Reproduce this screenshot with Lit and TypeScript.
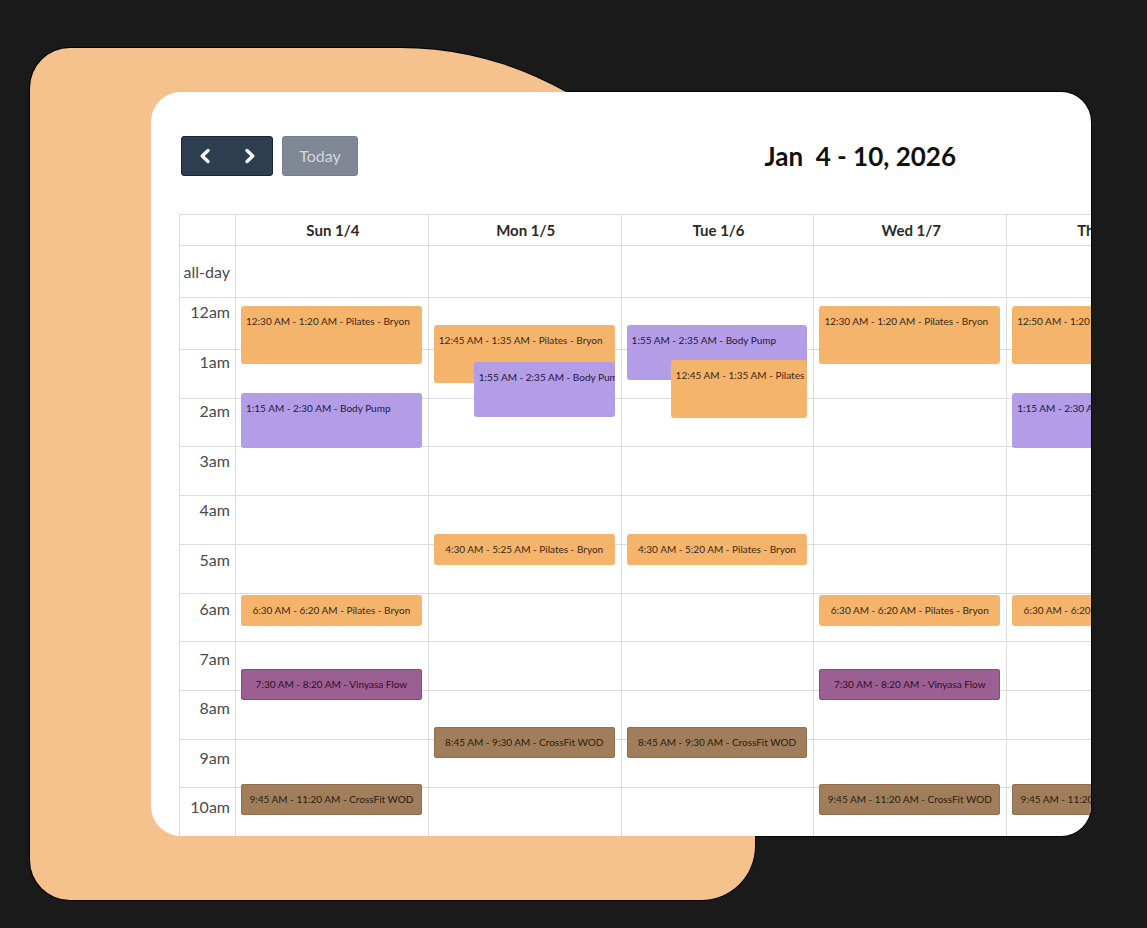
import { LitElement, html, css } from "lit";
import { customElement, property } from "lit/decorators.js";
import { styleMap } from "lit/directives/style-map.js";
import { classMap } from "lit/directives/class-map.js";

type Kind = "pilates" | "pump" | "yoga" | "crossfit";

interface ClassEvent {
  kind: Kind;
  text: string;
  top: number;
  height: number;
  indent?: number;
}

interface Day {
  label: string;
  events: ClassEvent[];
}

const HOURS = ["12am", "1am", "2am", "3am", "4am", "5am", "6am", "7am", "8am", "9am", "10am"];

const tall = (text: string, top: number, indent = 0): ClassEvent => ({ kind: "pilates", text, top, height: 58, indent });
const pump = (text: string, top: number, indent = 0): ClassEvent => ({ kind: "pump", text, top, height: 55, indent });
const short = (kind: Kind, text: string, top: number): ClassEvent => ({ kind, text, top, height: 31 });

const DAYS: Day[] = [
  {
    label: "Sun 1/4",
    events: [
      tall("12:30 AM - 1:20 AM - Pilates - Bryon", 8),
      pump("1:15 AM - 2:30 AM - Body Pump", 95),
      short("pilates", "6:30 AM - 6:20 AM - Pilates - Bryon", 297),
      short("yoga", "7:30 AM - 8:20 AM - Vinyasa Flow", 371),
      short("crossfit", "9:45 AM - 11:20 AM - CrossFit WOD", 486),
    ],
  },
  {
    label: "Mon 1/5",
    events: [
      tall("12:45 AM - 1:35 AM - Pilates - Bryon", 27),
      pump("1:55 AM - 2:35 AM - Body Pump", 64, 40),
      short("pilates", "4:30 AM - 5:25 AM - Pilates - Bryon", 236),
      short("crossfit", "8:45 AM - 9:30 AM - CrossFit WOD", 429),
    ],
  },
  {
    label: "Tue 1/6",
    events: [
      pump("1:55 AM - 2:35 AM - Body Pump", 27),
      tall("12:45 AM - 1:35 AM - Pilates - Bryon", 62, 44),
      short("pilates", "4:30 AM - 5:20 AM - Pilates - Bryon", 236),
      short("crossfit", "8:45 AM - 9:30 AM - CrossFit WOD", 429),
    ],
  },
  {
    label: "Wed 1/7",
    events: [
      tall("12:30 AM - 1:20 AM - Pilates - Bryon", 8),
      short("pilates", "6:30 AM - 6:20 AM - Pilates - Bryon", 297),
      short("yoga", "7:30 AM - 8:20 AM - Vinyasa Flow", 371),
      short("crossfit", "9:45 AM - 11:20 AM - CrossFit WOD", 486),
    ],
  },
  {
    label: "Thu 1/8",
    events: [
      tall("12:50 AM - 1:20 AM - Pilates - Bryon", 8),
      pump("1:15 AM - 2:30 AM - Body Pump", 95),
      short("pilates", "6:30 AM - 6:20 AM - Pilates - Bryon", 297),
      short("crossfit", "9:45 AM - 11:20 AM - CrossFit WOD", 486),
    ],
  },
];

@customElement("calendar-toolbar")
export class CalendarToolbar extends LitElement {
  static styles = css`
    :host {
      display: flex;
      align-items: center;
      justify-content: space-between;
      padding: 0 135px 0 2px;
      font-family: Lato, "Open Sans", sans-serif;
    }
    .actions {
      display: flex;
      gap: 9px;
    }
    .group {
      display: flex;
      box-sizing: border-box;
      width: 92px;
      height: 40px;
      border: 1px solid #1a2633;
      border-radius: 3px;
      background: #2c3e50;
      overflow: hidden;
    }
    button {
      margin: 0;
      padding: 0;
      border: 0;
      font: inherit;
      cursor: pointer;
    }
    .nav {
      flex: 1;
      display: flex;
      align-items: center;
      justify-content: center;
      background: transparent;
    }
    .icon {
      width: 12px;
      height: 16px;
      fill: none;
      stroke: #f4f6f8;
      stroke-width: 3.4;
      stroke-linecap: round;
      stroke-linejoin: round;
    }
    .today {
      width: 76px;
      height: 40px;
      padding-bottom: 2px;
      border: 1px solid #767f8c;
      border-radius: 3px;
      background: #808895;
      color: #d3d7dd;
      font-size: 16px;
    }
    .title {
      margin: 0;
      font-size: 26px;
      line-height: 32px;
      font-weight: 700;
      color: #111;
      white-space: pre;
    }
  `;

  render() {
    return html`
      <div class="actions">
        <div class="group">
          <button class="nav" type="button" aria-label="Previous week">
            <svg class="icon" viewBox="0 0 12 16"><path d="M9 2.5 3.2 8 9 13.5" /></svg>
          </button>
          <button class="nav" type="button" aria-label="Next week">
            <svg class="icon" viewBox="0 0 12 16"><path d="M3 2.5 8.8 8 3 13.5" /></svg>
          </button>
        </div>
        <button class="today" type="button">Today</button>
      </div>
      <h2 class="title">Jan  4 - 10, 2026</h2>
    `;
  }
}

@customElement("week-grid")
export class WeekGrid extends LitElement {
  @property({ attribute: false }) days: Day[] = [];

  static styles = css`
    :host {
      display: block;
      font-family: Lato, "Open Sans", sans-serif;
    }
    .week {
      width: calc(100% + 108px);
      table-layout: fixed;
      border-collapse: separate;
      border-spacing: 0;
    }
    .axis {
      width: 56px;
    }
    th,
    td {
      box-sizing: border-box;
      padding: 0;
      border-top: 1px solid #dcdcdc;
      border-left: 1px solid #dcdcdc;
      vertical-align: top;
    }
    .head {
      height: 31px;
      padding-left: 2px;
      font-size: 15px;
      line-height: 20px;
      font-weight: 700;
      color: #2a2a2a;
      text-align: center;
      vertical-align: middle;
    }
    .allday {
      height: 52px;
      padding-right: 5px;
      font-size: 16px;
      font-weight: 400;
      line-height: 20px;
      color: #4a4a4a;
      text-align: right;
      vertical-align: middle;
      white-space: nowrap;
    }
    .lane {
      position: relative;
      height: 538px;
      overflow: hidden;
    }
    .slots {
      display: grid;
      height: 100%;
      grid-template-rows: 51px repeat(10, 1fr);
    }
    .slot + .slot {
      border-top: 1px solid #dcdcdc;
    }
    .hours {
      position: absolute;
      inset: 0 5px auto 0;
      display: grid;
      grid-template-rows: repeat(11, 1fr);
      height: 545px;
      font-size: 16px;
      font-weight: 400;
      line-height: 28px;
      color: #4a4a4a;
      text-align: right;
    }
    .event {
      position: absolute;
      right: 6px;
      box-sizing: border-box;
      padding: 5px 0 0 5px;
      border-radius: 3px;
      overflow: hidden;
      font-size: 10px;
      line-height: 20px;
      color: #3b2812;
      text-decoration: none;
      white-space: nowrap;
    }
    .compact {
      padding: 5px 0 0;
      text-align: center;
    }
    .pilates {
      background: #f4b46c;
    }
    .pump {
      background: #b39de6;
      color: #24163f;
    }
    .yoga {
      background: #9c5f91;
      box-shadow: inset 0 0 0 1px #8a4a80;
      color: #2b1028;
    }
    .crossfit {
      background: #a17e5b;
      box-shadow: inset 0 0 0 1px #93704d;
      color: #2a1c0e;
    }
  `;

  private slots() {
    return html`<div class="slots">${HOURS.map(() => html`<div class="slot"></div>`)}</div>`;
  }

  private event(e: ClassEvent) {
    const place = { top: `${e.top}px`, height: `${e.height}px`, left: `${5 + (e.indent ?? 0)}px` };
    return html`<a
      href="#"
      class=${classMap({ event: true, [e.kind]: true, compact: e.height < 40 })}
      style=${styleMap(place)}
      >${e.text}</a
    >`;
  }

  render() {
    return html`
      <table class="week">
        <colgroup>
          <col class="axis" />
          ${this.days.map(() => html`<col />`)}
        </colgroup>
        <thead>
          <tr>
            <td class="head"></td>
            ${this.days.map((d) => html`<th class="head" scope="col">${d.label}</th>`)}
          </tr>
        </thead>
        <tbody>
          <tr>
            <th class="allday" scope="row">all-day</th>
            ${this.days.map(() => html`<td></td>`)}
          </tr>
          <tr>
            <td>
              <div class="lane">
                ${this.slots()}
                <div class="hours">${HOURS.map((h) => html`<span>${h}</span>`)}</div>
              </div>
            </td>
            ${this.days.map(
              (d) => html`<td>
                <div class="lane">${this.slots()} ${d.events.map((e) => this.event(e))}</div>
              </td>`
            )}
          </tr>
        </tbody>
      </table>
    `;
  }
}

@customElement("app-root")
export class AppRoot extends LitElement {
  static styles = css`
    :host {
      display: block;
      box-sizing: border-box;
      min-height: 100vh;
      padding: 48px 56px 28px 30px;
      background: #1a1a1a;
    }
    .stage {
      display: grid;
      grid-template-columns: 121px 604fr 336fr;
      grid-template-rows: 44px auto 64px;
    }
    .stage::before {
      content: "";
      grid-area: 2 / 2 / 3 / 4;
      border-radius: 30px;
      box-shadow: 0 0 0 1px #050505;
    }
    .backdrop {
      grid-area: 1 / 1 / 4 / 3;
      border-radius: 40px 355px 54px 40px / 40px 380px 54px 40px;
      background: #f5c28e;
      box-shadow: 0 0 0 1px #050505;
    }
    .card {
      grid-area: 2 / 2 / 3 / 4;
      display: flex;
      flex-direction: column;
      gap: 38px;
      min-width: 0;
      padding: 44px 0 0 28px;
      border-radius: 30px;
      background: #fff;
      overflow: hidden;
    }
  `;

  render() {
    return html`
      <main class="stage">
        <div class="backdrop"></div>
        <section class="card">
          <calendar-toolbar></calendar-toolbar>
          <week-grid .days=${DAYS}></week-grid>
        </section>
      </main>
    `;
  }
}
